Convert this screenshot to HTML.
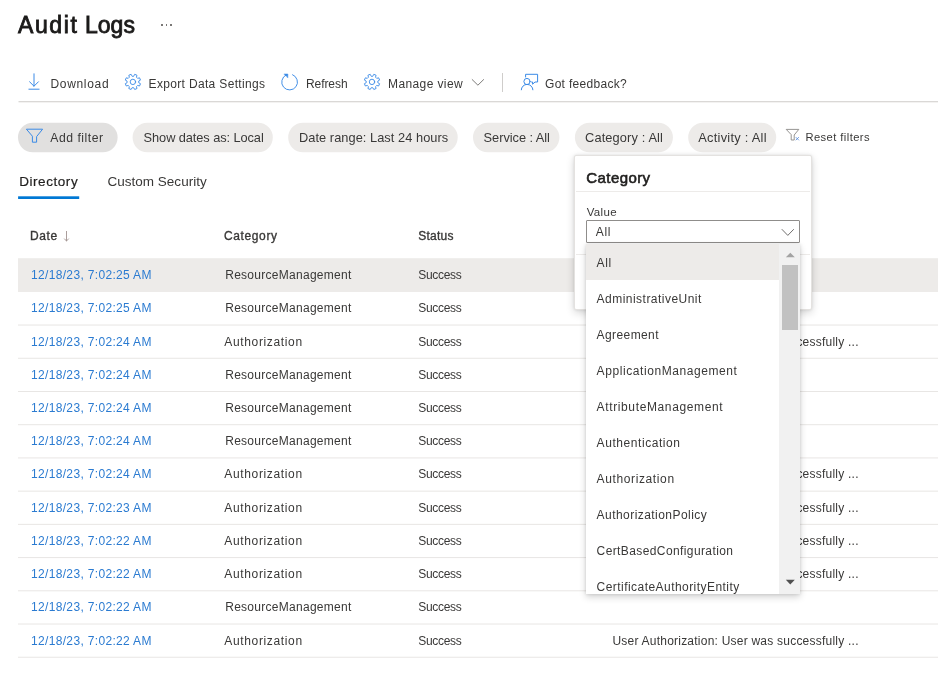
<!DOCTYPE html><html><head><meta charset="utf-8"><title>Audit Logs</title><style>

html,body{margin:0;padding:0;background:#fff;}
body{filter:blur(0.35px);}
body{width:938px;height:676px;position:relative;overflow:hidden;font-family:"Liberation Sans",sans-serif;}
.t{position:absolute;white-space:nowrap;line-height:1;}
.a{position:absolute;}
.pill{position:absolute;top:122.5px;height:29.6px;border-radius:15px;background:#edebe9;}
.sep{position:absolute;left:18px;right:0;height:1px;background:#edebe9;}
svg{position:absolute;overflow:visible;}

</style></head><body>
<div class="a" style="left:161.3px;top:24.4px;width:1.6px;height:1.6px;background:#7a7876"></div>
<div class="a" style="left:165.8px;top:24.4px;width:1.6px;height:1.6px;background:#7a7876"></div>
<div class="a" style="left:170.3px;top:24.4px;width:1.6px;height:1.6px;background:#7a7876"></div>
<div class="a" style="left:501.9px;top:72.6px;width:1px;height:19.6px;background:#cfcdcb"></div>
<svg width="938" height="676" style="left:0;top:0" viewBox="0 0 938 676"><rect x="18.5" y="101.1" width="920" height="1.2" fill="#d6d4d2"/><rect x="18" y="122.7" width="99.6" height="29.6" rx="14.8" fill="#e1e0df"/><rect x="132.6" y="122.7" width="140.2" height="29.6" rx="14.8" fill="#edebe9"/><rect x="288.2" y="122.7" width="169.5" height="29.6" rx="14.8" fill="#edebe9"/><rect x="473" y="122.7" width="86.4" height="29.6" rx="14.8" fill="#edebe9"/><rect x="574.9" y="122.7" width="98.0" height="29.6" rx="14.8" fill="#edebe9"/><rect x="688.2" y="122.7" width="88.0" height="29.6" rx="14.8" fill="#edebe9"/><rect x="18.1" y="196.3" width="61.1" height="2.7" fill="#0078d4"/><rect x="18" y="258.2" width="920" height="33.82" fill="#edebe9"/><rect x="18" y="324.54" width="920" height="1" fill="#e8e6e4"/><rect x="18" y="357.76" width="920" height="1" fill="#e8e6e4"/><rect x="18" y="390.98" width="920" height="1" fill="#e8e6e4"/><rect x="18" y="424.20" width="920" height="1" fill="#e8e6e4"/><rect x="18" y="457.42" width="920" height="1" fill="#e8e6e4"/><rect x="18" y="490.64" width="920" height="1" fill="#e8e6e4"/><rect x="18" y="523.86" width="920" height="1" fill="#e8e6e4"/><rect x="18" y="557.08" width="920" height="1" fill="#e8e6e4"/><rect x="18" y="590.30" width="920" height="1" fill="#e8e6e4"/><rect x="18" y="623.52" width="920" height="1" fill="#e8e6e4"/><rect x="18" y="656.74" width="920" height="1" fill="#e8e6e4"/></svg>
<svg width="938" height="676" style="left:0;top:0" viewBox="0 0 938 676" fill="none" stroke="#3a8ae6" stroke-width="1" stroke-linecap="round" stroke-linejoin="round">
<path d="M34 73.8 V86.2 M29.6 81.8 L34 86.2 L38.4 81.8 M28.9 89.2 H39.1"/>
<path d="M133.74 76.06 L134.70 74.31 L136.99 75.26 L136.44 77.18 L137.62 78.36 L139.54 77.81 L140.49 80.10 L138.74 81.06 L138.74 82.74 L140.49 83.70 L139.54 85.99 L137.62 85.44 L136.44 86.62 L136.99 88.54 L134.70 89.49 L133.74 87.74 L132.06 87.74 L131.10 89.49 L128.81 88.54 L129.36 86.62 L128.18 85.44 L126.26 85.99 L125.31 83.70 L127.06 82.74 L127.06 81.06 L125.31 80.10 L126.26 77.81 L128.18 78.36 L129.36 77.18 L128.81 75.26 L131.10 74.31 L132.06 76.06Z" stroke-width="0.9"/><circle cx="132.9" cy="81.9" r="2.7" stroke-width="0.9"/>
<path d="M372.84 76.06 L373.80 74.31 L376.09 75.26 L375.54 77.18 L376.72 78.36 L378.64 77.81 L379.59 80.10 L377.84 81.06 L377.84 82.74 L379.59 83.70 L378.64 85.99 L376.72 85.44 L375.54 86.62 L376.09 88.54 L373.80 89.49 L372.84 87.74 L371.16 87.74 L370.20 89.49 L367.91 88.54 L368.46 86.62 L367.28 85.44 L365.36 85.99 L364.41 83.70 L366.16 82.74 L366.16 81.06 L364.41 80.10 L365.36 77.81 L367.28 78.36 L368.46 77.18 L367.91 75.26 L370.20 74.31 L371.16 76.06Z" stroke-width="0.9"/><circle cx="372.0" cy="81.9" r="2.7" stroke-width="0.9"/>
<path d="M292.56 74.68 A7.9 7.9 0 1 1 286.14 74.90" stroke-width="0.95"/>
<path d="M284.24 74.00 L287.84 74.00 L287.84 77.60 Z" fill="#3a8ae6" stroke-width="0.5"/>
<path d="M472.2 79.6 L477.9 85.2 L483.6 79.6" stroke="#6e6c6a" stroke-width="0.9"/>
<circle cx="527" cy="81.5" r="3.1"/>
<path d="M521.3 89.8 A5.8 5.4 0 0 1 532.9 89.8"/>
<path d="M525.6 77 V74.3 H537.6 V82 H535 L532.6 84.2 V82 H531.6"/>
<path d="M26.8 129.2 H42.6 L36.6 136.6 V142.2 H32.4 V136.6 Z"/>
<path d="M786.6 129.4 H798.8 L794.2 135 V140 H791.2 V135 Z" stroke="#8a8886" stroke-width="0.9"/>
<path d="M796 137.4 L798.6 140 M798.6 137.4 L796 140" stroke="#4f86dc" stroke-width="0.8"/>
<path d="M66.5 231.4 V241 M64.5 238.9 L66.5 241 L68.5 238.9" stroke="#a19391" stroke-width="0.9"/>
</svg>
<span id="t0" class="t" style="left:18.10px;top:14.01px;font-size:23px;font-weight:400;color:#1b1a19;-webkit-text-stroke:0.83px #1b1a19;letter-spacing:1.567px">Audit</span>
<span id="t1" class="t" style="left:84.90px;top:14.01px;font-size:23px;font-weight:400;color:#1b1a19;-webkit-text-stroke:0.83px #1b1a19;letter-spacing:0.042px">Logs</span>
<span id="t2" class="t" style="left:50.40px;top:78.01px;font-size:12px;font-weight:400;color:#393837;letter-spacing:0.701px">Download</span>
<span id="t3" class="t" style="left:148.60px;top:78.01px;font-size:12px;font-weight:400;color:#393837;letter-spacing:0.334px">Export Data Settings</span>
<span id="t4" class="t" style="left:306.00px;top:78.01px;font-size:12px;font-weight:400;color:#393837;letter-spacing:-0.074px">Refresh</span>
<span id="t5" class="t" style="left:388.00px;top:78.01px;font-size:12px;font-weight:400;color:#393837;letter-spacing:0.396px">Manage view</span>
<span id="t6" class="t" style="left:545.00px;top:78.01px;font-size:12px;font-weight:400;color:#393837;letter-spacing:0.302px">Got feedback?</span>
<span id="t7" class="t" style="left:50.30px;top:132.01px;font-size:12.2px;font-weight:400;color:#393837;letter-spacing:0.518px">Add filter</span>
<span id="t8" class="t" style="left:143.60px;top:132.01px;font-size:12.8px;font-weight:400;color:#393837;letter-spacing:-0.079px">Show dates as: Local</span>
<span id="t9" class="t" style="left:299.00px;top:132.01px;font-size:12.8px;font-weight:400;color:#393837;letter-spacing:0.051px">Date range: Last 24 hours</span>
<span id="t10" class="t" style="left:483.60px;top:132.01px;font-size:12.8px;font-weight:400;color:#393837;letter-spacing:-0.043px">Service : All</span>
<span id="t11" class="t" style="left:585.00px;top:132.01px;font-size:12.8px;font-weight:400;color:#393837;letter-spacing:0.141px">Category : All</span>
<span id="t12" class="t" style="left:698.20px;top:132.01px;font-size:12.8px;font-weight:400;color:#393837;letter-spacing:0.279px">Activity : All</span>
<span id="t13" class="t" style="left:805.40px;top:132.01px;font-size:11.2px;font-weight:400;color:#393837;letter-spacing:0.428px">Reset filters</span>
<span id="t14" class="t" style="left:19.20px;top:175.01px;font-size:13.5px;font-weight:400;color:#201f1e;-webkit-text-stroke:0.19px #201f1e;letter-spacing:0.555px">Directory</span>
<span id="t15" class="t" style="left:107.40px;top:175.01px;font-size:13.5px;font-weight:400;color:#393837;letter-spacing:0.023px">Custom Security</span>
<span id="t16" class="t" style="left:30.00px;top:230.01px;font-size:12px;font-weight:400;color:#393837;-webkit-text-stroke:0.34px #393837;letter-spacing:0.609px">Date</span>
<span id="t17" class="t" style="left:224.00px;top:230.01px;font-size:12px;font-weight:400;color:#393837;-webkit-text-stroke:0.34px #393837;letter-spacing:0.616px">Category</span>
<span id="t18" class="t" style="left:418.30px;top:230.01px;font-size:12px;font-weight:400;color:#393837;-webkit-text-stroke:0.34px #393837;letter-spacing:0.216px">Status</span>
<span id="t19" class="t" style="left:31.00px;top:269.01px;font-size:12px;font-weight:400;color:#2b7bd1;letter-spacing:0.334px">12/18/23, 7:02:25 AM</span>
<span id="t20" class="t" style="left:225.20px;top:269.01px;font-size:12px;font-weight:400;color:#393837;letter-spacing:0.278px">ResourceManagement</span>
<span id="t21" class="t" style="left:418.30px;top:269.01px;font-size:12px;font-weight:400;color:#393837;letter-spacing:-0.309px">Success</span>
<span id="t22" class="t" style="left:31.00px;top:302.01px;font-size:12px;font-weight:400;color:#2b7bd1;letter-spacing:0.334px">12/18/23, 7:02:25 AM</span>
<span id="t23" class="t" style="left:225.20px;top:302.01px;font-size:12px;font-weight:400;color:#393837;letter-spacing:0.278px">ResourceManagement</span>
<span id="t24" class="t" style="left:418.30px;top:302.01px;font-size:12px;font-weight:400;color:#393837;letter-spacing:-0.309px">Success</span>
<span id="t25" class="t" style="left:31.00px;top:336.00px;font-size:12px;font-weight:400;color:#2b7bd1;letter-spacing:0.334px">12/18/23, 7:02:24 AM</span>
<span id="t26" class="t" style="left:224.30px;top:336.00px;font-size:12px;font-weight:400;color:#393837;letter-spacing:0.644px">Authorization</span>
<span id="t27" class="t" style="left:418.30px;top:336.00px;font-size:12px;font-weight:400;color:#393837;letter-spacing:-0.309px">Success</span>
<span id="t28" class="t" style="left:612.40px;top:336.00px;font-size:12px;font-weight:400;color:#393837;letter-spacing:0.227px">User Authorization: User was successfully ...</span>
<span id="t29" class="t" style="left:31.00px;top:369.01px;font-size:12px;font-weight:400;color:#2b7bd1;letter-spacing:0.334px">12/18/23, 7:02:24 AM</span>
<span id="t30" class="t" style="left:225.20px;top:369.01px;font-size:12px;font-weight:400;color:#393837;letter-spacing:0.278px">ResourceManagement</span>
<span id="t31" class="t" style="left:418.30px;top:369.01px;font-size:12px;font-weight:400;color:#393837;letter-spacing:-0.309px">Success</span>
<span id="t32" class="t" style="left:31.00px;top:402.01px;font-size:12px;font-weight:400;color:#2b7bd1;letter-spacing:0.334px">12/18/23, 7:02:24 AM</span>
<span id="t33" class="t" style="left:225.20px;top:402.01px;font-size:12px;font-weight:400;color:#393837;letter-spacing:0.278px">ResourceManagement</span>
<span id="t34" class="t" style="left:418.30px;top:402.01px;font-size:12px;font-weight:400;color:#393837;letter-spacing:-0.309px">Success</span>
<span id="t35" class="t" style="left:31.00px;top:435.00px;font-size:12px;font-weight:400;color:#2b7bd1;letter-spacing:0.334px">12/18/23, 7:02:24 AM</span>
<span id="t36" class="t" style="left:225.20px;top:435.00px;font-size:12px;font-weight:400;color:#393837;letter-spacing:0.278px">ResourceManagement</span>
<span id="t37" class="t" style="left:418.30px;top:435.00px;font-size:12px;font-weight:400;color:#393837;letter-spacing:-0.309px">Success</span>
<span id="t38" class="t" style="left:31.00px;top:468.02px;font-size:12px;font-weight:400;color:#2b7bd1;letter-spacing:0.334px">12/18/23, 7:02:24 AM</span>
<span id="t39" class="t" style="left:224.30px;top:468.02px;font-size:12px;font-weight:400;color:#393837;letter-spacing:0.644px">Authorization</span>
<span id="t40" class="t" style="left:418.30px;top:468.02px;font-size:12px;font-weight:400;color:#393837;letter-spacing:-0.309px">Success</span>
<span id="t41" class="t" style="left:612.40px;top:468.02px;font-size:12px;font-weight:400;color:#393837;letter-spacing:0.227px">User Authorization: User was successfully ...</span>
<span id="t42" class="t" style="left:31.00px;top:502.01px;font-size:12px;font-weight:400;color:#2b7bd1;letter-spacing:0.334px">12/18/23, 7:02:23 AM</span>
<span id="t43" class="t" style="left:224.30px;top:502.01px;font-size:12px;font-weight:400;color:#393837;letter-spacing:0.644px">Authorization</span>
<span id="t44" class="t" style="left:418.30px;top:502.01px;font-size:12px;font-weight:400;color:#393837;letter-spacing:-0.309px">Success</span>
<span id="t45" class="t" style="left:612.40px;top:502.01px;font-size:12px;font-weight:400;color:#393837;letter-spacing:0.227px">User Authorization: User was successfully ...</span>
<span id="t46" class="t" style="left:31.00px;top:535.01px;font-size:12px;font-weight:400;color:#2b7bd1;letter-spacing:0.334px">12/18/23, 7:02:22 AM</span>
<span id="t47" class="t" style="left:224.30px;top:535.01px;font-size:12px;font-weight:400;color:#393837;letter-spacing:0.644px">Authorization</span>
<span id="t48" class="t" style="left:418.30px;top:535.01px;font-size:12px;font-weight:400;color:#393837;letter-spacing:-0.309px">Success</span>
<span id="t49" class="t" style="left:612.40px;top:535.01px;font-size:12px;font-weight:400;color:#393837;letter-spacing:0.227px">User Authorization: User was successfully ...</span>
<span id="t50" class="t" style="left:31.00px;top:568.00px;font-size:12px;font-weight:400;color:#2b7bd1;letter-spacing:0.334px">12/18/23, 7:02:22 AM</span>
<span id="t51" class="t" style="left:224.30px;top:568.00px;font-size:12px;font-weight:400;color:#393837;letter-spacing:0.644px">Authorization</span>
<span id="t52" class="t" style="left:418.30px;top:568.00px;font-size:12px;font-weight:400;color:#393837;letter-spacing:-0.309px">Success</span>
<span id="t53" class="t" style="left:612.40px;top:568.00px;font-size:12px;font-weight:400;color:#393837;letter-spacing:0.227px">User Authorization: User was successfully ...</span>
<span id="t54" class="t" style="left:31.00px;top:601.01px;font-size:12px;font-weight:400;color:#2b7bd1;letter-spacing:0.334px">12/18/23, 7:02:22 AM</span>
<span id="t55" class="t" style="left:225.20px;top:601.01px;font-size:12px;font-weight:400;color:#393837;letter-spacing:0.278px">ResourceManagement</span>
<span id="t56" class="t" style="left:418.30px;top:601.01px;font-size:12px;font-weight:400;color:#393837;letter-spacing:-0.309px">Success</span>
<span id="t57" class="t" style="left:31.00px;top:635.01px;font-size:12px;font-weight:400;color:#2b7bd1;letter-spacing:0.334px">12/18/23, 7:02:22 AM</span>
<span id="t58" class="t" style="left:224.30px;top:635.01px;font-size:12px;font-weight:400;color:#393837;letter-spacing:0.644px">Authorization</span>
<span id="t59" class="t" style="left:418.30px;top:635.01px;font-size:12px;font-weight:400;color:#393837;letter-spacing:-0.309px">Success</span>
<span id="t60" class="t" style="left:612.40px;top:635.01px;font-size:12px;font-weight:400;color:#393837;letter-spacing:0.227px">User Authorization: User was successfully ...</span>
<div class="a" style="left:574.2px;top:154.8px;width:237.4px;height:155px;background:#fff;border:1px solid #e4e2e0;border-radius:2px;box-sizing:border-box;box-shadow:0 3px 8px rgba(0,0,0,0.16),0 0 3px rgba(0,0,0,0.10)"></div>
<div class="a" style="left:575.8px;top:191.4px;width:234px;height:1px;background:#edebe9"></div>
<div class="a" style="left:575.8px;top:253.8px;width:234px;height:1px;background:#edebe9"></div>
<div class="a" style="left:585.6px;top:220.4px;width:214.8px;height:23px;box-sizing:border-box;border:1px solid #8f8d8b;border-radius:1px;background:#fff"></div>
<svg width="938" height="676" style="left:0;top:0" viewBox="0 0 938 676" fill="none"><path d="M781.8 229.2 L787.8 235.4 L793.8 229.2" stroke="#605e5c" stroke-width="0.9"/></svg>
<div class="a" style="left:585.6px;top:243.6px;width:214.8px;height:350px;background:#fff;box-shadow:0 3px 7px rgba(0,0,0,0.18),0 0 3px rgba(0,0,0,0.12);overflow:hidden"><div class="a" style="left:0;top:0;width:193.6px;height:36.2px;background:#edebe9"></div><div class="a" style="left:193.6px;top:0;width:21.2px;height:100%;background:#f1f1f1"></div><div class="a" style="left:196.6px;top:21.6px;width:16px;height:64.6px;background:#c1c1c1"></div><svg width="21" height="350" style="left:194px;top:0" viewBox="0 0 21 350"><path d="M5.8 13.3 L10.3 8.7 L14.8 13.3Z" fill="#a3a3a3"/><path d="M5.8 335.8 L10.3 340.4 L14.8 335.8Z" fill="#505050"/></svg></div>
<span id="p0" class="t" style="left:586.30px;top:170.01px;font-size:15px;font-weight:400;color:#201f1e;-webkit-text-stroke:0.60px #201f1e;letter-spacing:0.419px">Category</span>
<span id="p1" class="t" style="left:586.70px;top:207.00px;font-size:11.5px;font-weight:400;color:#393837;letter-spacing:0.359px">Value</span>
<span id="p2" class="t" style="left:595.80px;top:226.02px;font-size:12px;font-weight:400;color:#393837;letter-spacing:0.665px">All</span>
<span id="p3" class="t" style="left:596.60px;top:257.01px;font-size:12px;font-weight:400;color:#393837;letter-spacing:0.665px">All</span>
<span id="p4" class="t" style="left:596.60px;top:293.01px;font-size:12px;font-weight:400;color:#393837;letter-spacing:0.473px">AdministrativeUnit</span>
<span id="p5" class="t" style="left:596.60px;top:329.01px;font-size:12px;font-weight:400;color:#393837;letter-spacing:0.404px">Agreement</span>
<span id="p6" class="t" style="left:596.60px;top:365.02px;font-size:12px;font-weight:400;color:#393837;letter-spacing:0.579px">ApplicationManagement</span>
<span id="p7" class="t" style="left:596.60px;top:401.01px;font-size:12px;font-weight:400;color:#393837;letter-spacing:0.628px">AttributeManagement</span>
<span id="p8" class="t" style="left:596.60px;top:437.01px;font-size:12px;font-weight:400;color:#393837;letter-spacing:0.563px">Authentication</span>
<span id="p9" class="t" style="left:596.60px;top:473.00px;font-size:12px;font-weight:400;color:#393837;letter-spacing:0.619px">Authorization</span>
<span id="p10" class="t" style="left:596.60px;top:509.01px;font-size:12px;font-weight:400;color:#393837;letter-spacing:0.447px">AuthorizationPolicy</span>
<span id="p11" class="t" style="left:596.60px;top:545.01px;font-size:12px;font-weight:400;color:#393837;letter-spacing:0.395px">CertBasedConfiguration</span>
<span id="p12" class="t" style="left:596.60px;top:581.01px;font-size:12px;font-weight:400;color:#393837;letter-spacing:0.449px">CertificateAuthorityEntity</span>
</body></html>
